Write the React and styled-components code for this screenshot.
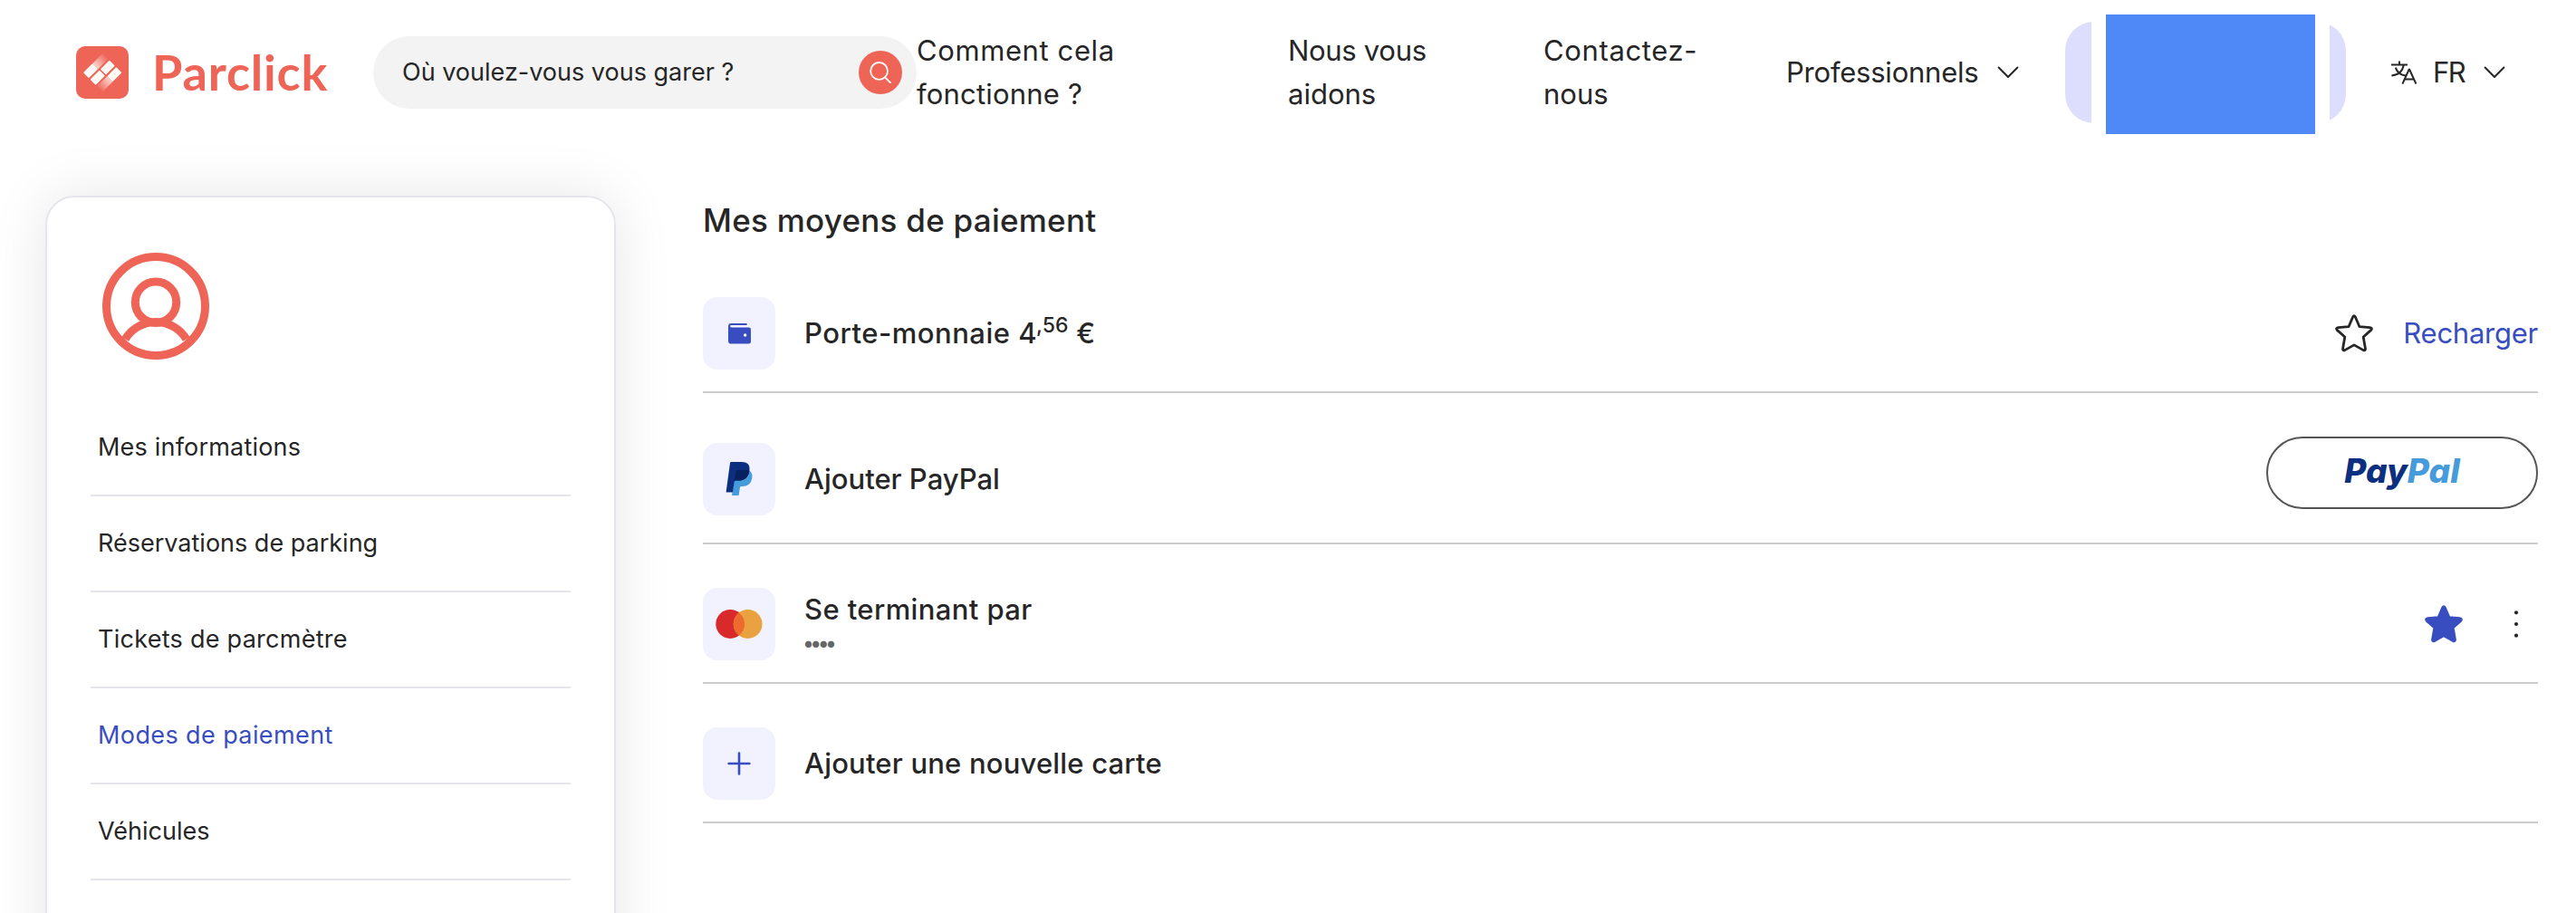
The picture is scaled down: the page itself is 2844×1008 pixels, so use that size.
import React, { useState } from 'react';
import styled, { createGlobalStyle } from 'styled-components';

const menuItems = [
  { label: 'Mes informations', spacing: 0.2 },
  { label: 'Réservations de parking', spacing: 0 },
  { label: 'Tickets de parcmètre', spacing: 0.27 },
  { label: 'Modes de paiement', spacing: 0.4 },
  { label: 'Véhicules', spacing: 0 },
];

const LogoIcon = () => (
  <svg width='58' height='58' viewBox='0 0 58 58'>
    <defs>
      <linearGradient id='fadeUp' x1='0' y1='0' x2='1' y2='0'>
        <stop offset='0' stopColor='#fffaf5' stopOpacity='0.75' />
        <stop offset='1' stopColor='#fffaf5' stopOpacity='0.05' />
      </linearGradient>
      <linearGradient id='fadeDown' x1='1' y1='0' x2='0' y2='0'>
        <stop offset='0' stopColor='#fffaf5' stopOpacity='0.75' />
        <stop offset='1' stopColor='#fffaf5' stopOpacity='0.05' />
      </linearGradient>
    </defs>
    <rect width='58' height='58' rx='10' fill='#ee6457' />
    <g transform='translate(29.2 29.2) rotate(-45)' fill='#fffaf5'>
      <rect x='-15' y='-15' width='14.2' height='8.6' rx='1' />
      <rect x='-0.8' y='-15' width='15.8' height='8.6' fill='url(#fadeUp)' />
      <rect x='-15' y='-4.3' width='14.5' height='8.6' rx='1' />
      <rect x='1' y='-4.3' width='14' height='8.6' rx='1' />
      <rect x='-15' y='6.4' width='15.8' height='8.6' fill='url(#fadeDown)' />
      <rect x='0.8' y='6.4' width='14.2' height='8.6' rx='1' />
    </g>
  </svg>
);

const SearchIcon = () => (
  <svg width='24' height='24' viewBox='0 0 24 24' fill='none' stroke='#fff' strokeWidth='1.8'>
    <circle cx='10.6' cy='10.4' r='9.4' />
    <path d='M17 17.3L23.2 23.3' strokeLinecap='round' />
  </svg>
);

const ChevronIcon = () => (
  <svg width='24' height='14' viewBox='0 0 24 14' fill='none' stroke='#262626' strokeWidth='2'>
    <path d='M1.6 1.5L12 12L22.4 1.5' strokeLinecap='round' strokeLinejoin='round' />
  </svg>
);

const TranslateIcon = () => (
  <svg width='28' height='26' viewBox='0 0 28 26' fill='none' stroke='#262626' strokeWidth='2'>
    <path d='M0 4.6H18M9 0.6V4.6M13.8 4.6C12.6 11.5 8 15.8 0.4 16.4M4.8 7.6C6.4 12.4 10.4 15.8 16 16.6' />
    <path d='M12.4 25.6L19.6 9.8H20.2L27.4 25.6M14.8 20.6H25' />
  </svg>
);

const UserIcon = () => (
  <svg width='118' height='118' viewBox='0 0 118 118' fill='none' stroke='#ee6457' strokeWidth='9'>
    <circle cx='59' cy='59' r='54.5' />
    <circle cx='59' cy='54.7' r='22.7' />
    <path d='M25.2 95.5A39.5 39.5 0 0 1 92.8 95.5' />
  </svg>
);

const WalletIcon = () => (
  <svg width='25' height='23' viewBox='0 0 25 23'>
    <path
      d='M3.4 0H20.6V1.9H3.8Q2 1.9 2 3.1Q2 4.4 3.8 4.4H22.6Q25 4.4 25 6.8V20.2Q25 22.6 22.6 22.6H3.4Q0 22.6 0 19.2V3.4Q0 0 3.4 0Z'
      fill='#384ec0'
    />
    <circle cx='18.6' cy='13' r='1.7' fill='#fff' />
  </svg>
);

const PaypalIcon = () => (
  <svg width='30' height='38' viewBox='0 0 30 38'>
    <path
      d='M26.4 9.5C29.2 11.5 30 14.4 29.2 18.3C28 24.3 24.2 27 18.6 27H17.4Q16.2 27 16 28.3L14.6 37H7L10.2 16Z'
      fill='#469bdb'
    />
    <path
      d='M6.4 0H17.6C23.8 0 27.4 2.9 26.4 9.5C25.2 17.3 21 20.6 14 20.6H11.4Q10 20.6 9.7 22L7.9 33.4H0.6L5 1.3Q5.2 0 6.4 0Z'
      fill='#0c2f80'
    />
    <path
      d='M12.9 8.9H22.6Q25 8.9 26.4 9.8C25.2 17.3 21 20.6 14 20.6H11.4Q10.3 20.6 9.8 21.6L11.5 10.2Q11.8 8.9 12.9 8.9Z'
      fill='#081f60'
    />
  </svg>
);

const MastercardIcon = () => (
  <svg width='52' height='32' viewBox='0 0 52 32'>
    <circle cx='16.2' cy='16' r='15.9' fill='#d82a2b' />
    <circle cx='35.6' cy='16' r='15.9' fill='#e9a23f' />
    <path d='M25.9 3.4A15.9 15.9 0 0 1 25.9 28.6A15.9 15.9 0 0 1 25.9 3.4Z' fill='#ee6b2d' />
  </svg>
);

const PlusIcon = () => (
  <svg width='26' height='26' viewBox='0 0 26 26' stroke='#384ec0' strokeWidth='2.6'>
    <path d='M13 1.6V24.4M1.6 13H24.4' strokeLinecap='round' />
  </svg>
);

const StarIcon = ({ filled }) => (
  <svg
    width='44'
    height='44'
    viewBox='0 0 44 44'
    fill={filled ? '#384ec0' : 'none'}
    stroke={filled ? '#384ec0' : '#262626'}
    strokeWidth='2.8'
    strokeLinejoin='round'
  >
    <path d='M20.7 3.7Q22 1.8 23.3 3.7L28 14.7L39.6 15.6Q42.6 16.2 40.8 18.4L32.2 26L34.5 39.2Q34.5 41.4 32.3 40.6L22 34.9L11.7 40.6Q9.5 41.4 9.5 39.2L11.8 26L3.2 18.4Q1.4 16.2 4.4 15.6L16 14.7Z' />
  </svg>
);

const KebabIcon = () => (
  <svg width='6' height='32' viewBox='0 0 6 32' fill='#262626'>
    <circle cx='3' cy='3.3' r='2.1' />
    <circle cx='3' cy='16' r='2.1' />
    <circle cx='3' cy='28.7' r='2.1' />
  </svg>
);

const App = () => {
  const [current, setCurrent] = useState('Modes de paiement');

  return (
    <>
      <GlobalStyle />
      <Page>
        <Header>
          <Logo href='#'>
            <LogoIcon />
            <LogoText>Parclick</LogoText>
          </Logo>
          <SearchBar>
            <SearchLabel>Où voulez-vous vous garer ?</SearchLabel>
            <SearchButton type='button' aria-label='Rechercher'>
              <SearchIcon />
            </SearchButton>
          </SearchBar>
          <NavLink $width={410}>
            <NavLine $spacing={0.6}>Comment cela</NavLine>
            <NavLine $spacing={0.2}>fonctionne ?</NavLine>
          </NavLink>
          <NavLink $width={282}>
            <NavLine $spacing={-0.3}>Nous vous</NavLine>
            <NavLine $spacing={0}>aidons</NavLine>
          </NavLink>
          <NavLink $width={268}>
            <NavLine $spacing={0.64}>Contactez-</NavLine>
            <NavLine $spacing={0}>nous</NavLine>
          </NavLink>
          <Dropdown type='button' $width={308}>
            <NavLine $spacing={-0.22}>Professionnels</NavLine>
            <ChevronIcon />
          </Dropdown>
          <AccountPill>
            <AccountGap>
              <AccountBlock />
            </AccountGap>
          </AccountPill>
          <Language type='button'>
            <TranslateIcon />
            <LanguageCode>FR</LanguageCode>
            <ChevronIcon />
          </Language>
        </Header>
        <Content>
          <Sidebar>
            <Profile>
              <UserIcon />
            </Profile>
            <ul>
              {menuItems.map((item) => (
                <MenuItem
                  key={item.label}
                  $active={item.label === current}
                  $spacing={item.spacing}
                  onClick={() => setCurrent(item.label)}
                >
                  {item.label}
                </MenuItem>
              ))}
            </ul>
          </Sidebar>
          <Main>
            <Title>Mes moyens de paiement</Title>
            <Method>
              <IconTile>
                <WalletIcon />
              </IconTile>
              <MethodName $spacing={0.5}>
                Porte-monnaie 4<Cents>,56</Cents> €
              </MethodName>
              <StarIcon />
              <Recharge type='button'>Recharger</Recharge>
            </Method>
            <Method $height={93}>
              <IconTile>
                <PaypalIcon />
              </IconTile>
              <MethodName $spacing={0}>Ajouter PayPal</MethodName>
              <PaypalButton type='button'>
                Pay<span>Pal</span>
              </PaypalButton>
            </Method>
            <Method>
              <IconTile>
                <MastercardIcon />
              </IconTile>
              <MethodText>
                <MethodName $spacing={0.39}>Se terminant par</MethodName>
                <CardNumber>••••</CardNumber>
              </MethodText>
              <StarIcon filled />
              <MoreButton type='button' aria-label='Options'>
                <KebabIcon />
              </MoreButton>
            </Method>
            <Method>
              <IconTile>
                <PlusIcon />
              </IconTile>
              <MethodName $spacing={0.19}>Ajouter une nouvelle carte</MethodName>
            </Method>
          </Main>
        </Content>
      </Page>
    </>
  );
};

export default App;

const GlobalStyle = createGlobalStyle`
  * {
    box-sizing: border-box;
  }
  body {
    margin: 0;
    background-color: #fff;
    color: #262626;
    font-family: Inter, 'Liberation Sans', sans-serif;
  }
  ul, h1, p {
    margin: 0;
    padding: 0;
    list-style: none;
  }
  button {
    padding: 0;
    border: none;
    background: none;
    color: inherit;
    font: inherit;
    cursor: pointer;
  }
  svg {
    display: block;
    flex-shrink: 0;
  }
`;

const Page = styled.div`
  width: 2844px;
  height: 1008px;
  overflow: hidden;
`;

const Header = styled.header`
  display: flex;
  align-items: center;
  height: 160px;
  padding-left: 84px;
`;

const Logo = styled.a`
  display: flex;
  align-items: center;
  gap: 26px;
  width: 328px;
  color: #ee6457;
  text-decoration: none;
`;

const LogoText = styled.span`
  font-family: Lato, sans-serif;
  font-size: 54px;
  font-weight: 700;
  line-height: 60px;
  letter-spacing: 0.85px;
`;

const SearchBar = styled.div`
  display: flex;
  align-items: center;
  justify-content: space-between;
  width: 600px;
  height: 80px;
  padding: 0 16px 0 32px;
  border-radius: 40px;
  background-color: #f3f3f3;
`;

const SearchLabel = styled.span`
  font-size: 27px;
  line-height: 40px;
`;

const SearchButton = styled.button`
  display: flex;
  align-items: center;
  justify-content: center;
  width: 48px;
  height: 48px;
  border-radius: 50%;
  background-color: #ee6457;
`;

const NavLink = styled.div`
  width: ${(p) => p.$width}px;
`;

const NavLine = styled.span`
  display: block;
  font-size: 31px;
  line-height: 48px;
  letter-spacing: ${(p) => p.$spacing}px;
  white-space: nowrap;
`;

const Dropdown = styled.button`
  display: flex;
  align-items: center;
  gap: 20px;
  width: ${(p) => p.$width}px;
`;

const AccountPill = styled.div`
  display: flex;
  align-items: center;
  width: 310px;
  height: 112px;
  padding-left: 29px;
  border-radius: 32px;
  background-color: #dddefd;
`;

const AccountGap = styled.div`
  display: flex;
  align-items: center;
  justify-content: center;
  width: 263px;
  height: 100%;
  background-color: #fff;
`;

const AccountBlock = styled.div`
  flex-shrink: 0;
  width: 231px;
  height: 132px;
  margin-top: 3px;
  background-color: #4f88f7;
`;

const Language = styled.button`
  display: flex;
  align-items: center;
  margin-left: 50px;
`;

const LanguageCode = styled.span`
  width: 56px;
  margin-left: 18px;
  font-size: 31px;
  line-height: 48px;
  letter-spacing: -1.5px;
  text-align: left;
`;

const Content = styled.div`
  display: flex;
  padding-left: 50px;
`;

const Sidebar = styled.aside`
  width: 630px;
  height: 900px;
  margin-top: 56px;
  padding: 0 48px;
  border: 2px solid #e5e6ec;
  border-radius: 32px;
  box-shadow: 0 0 64px rgba(0, 0, 0, 0.1);
`;

const Profile = styled.div`
  height: 224px;
  padding: 61px 0 0 13px;
`;

const MenuItem = styled.li`
  display: flex;
  align-items: center;
  height: 106px;
  padding: 0 0 2px 8px;
  border-bottom: 2px solid #e5e6ec;
  font-size: 27px;
  letter-spacing: ${(p) => p.$spacing}px;
  color: ${(p) => (p.$active ? '#384ec0' : '#262626')};
  cursor: pointer;
`;

const Main = styled.main`
  width: 2026px;
  margin-left: 96px;
`;

const Title = styled.h1`
  padding: 59px 0 61px;
  font-size: 35px;
  font-weight: 500;
  line-height: 48px;
  letter-spacing: 0.25px;
`;

const Method = styled.section`
  display: flex;
  align-items: center;
  box-sizing: content-box;
  height: ${(p) => p.$height || 80}px;
  padding-bottom: 24px;
  margin-bottom: 48px;
  border-bottom: 2px solid #ccc;
`;

const IconTile = styled.div`
  display: flex;
  align-items: center;
  justify-content: center;
  flex-shrink: 0;
  width: 80px;
  height: 80px;
  margin-right: 32px;
  border-radius: 16px;
  background-color: #f2f2fe;
`;

const MethodName = styled.p`
  flex: 1;
  font-size: 31px;
  font-weight: 500;
  line-height: 48px;
  letter-spacing: ${(p) => p.$spacing}px;
`;

const Cents = styled.sup`
  margin-left: -1px;
  font-size: 23px;
  line-height: 0;
  letter-spacing: 0;
  vertical-align: 12px;
`;

const Recharge = styled.button`
  margin-left: 32px;
  color: #384ec0;
  font-size: 31px;
  line-height: 48px;
  letter-spacing: -0.25px;
`;

const PaypalButton = styled.button`
  align-self: flex-start;
  width: 300px;
  height: 80px;
  padding-bottom: 5px;
  border: 2px solid #555;
  border-radius: 40px;
  color: #0c2f80;
  font-size: 37px;
  font-style: italic;
  font-weight: 800;
  line-height: 48px;
  & span {
    color: #469bdb;
  }
`;

const MethodText = styled.div`
  flex: 1;
  height: 80px;
`;

const CardNumber = styled.p`
  margin-left: -2px;
  color: #666;
  font-size: 23px;
  line-height: 26px;
  letter-spacing: -4.6px;
`;

const MoreButton = styled.button`
  display: flex;
  justify-content: center;
  width: 48px;
  margin-left: 34px;
`;
